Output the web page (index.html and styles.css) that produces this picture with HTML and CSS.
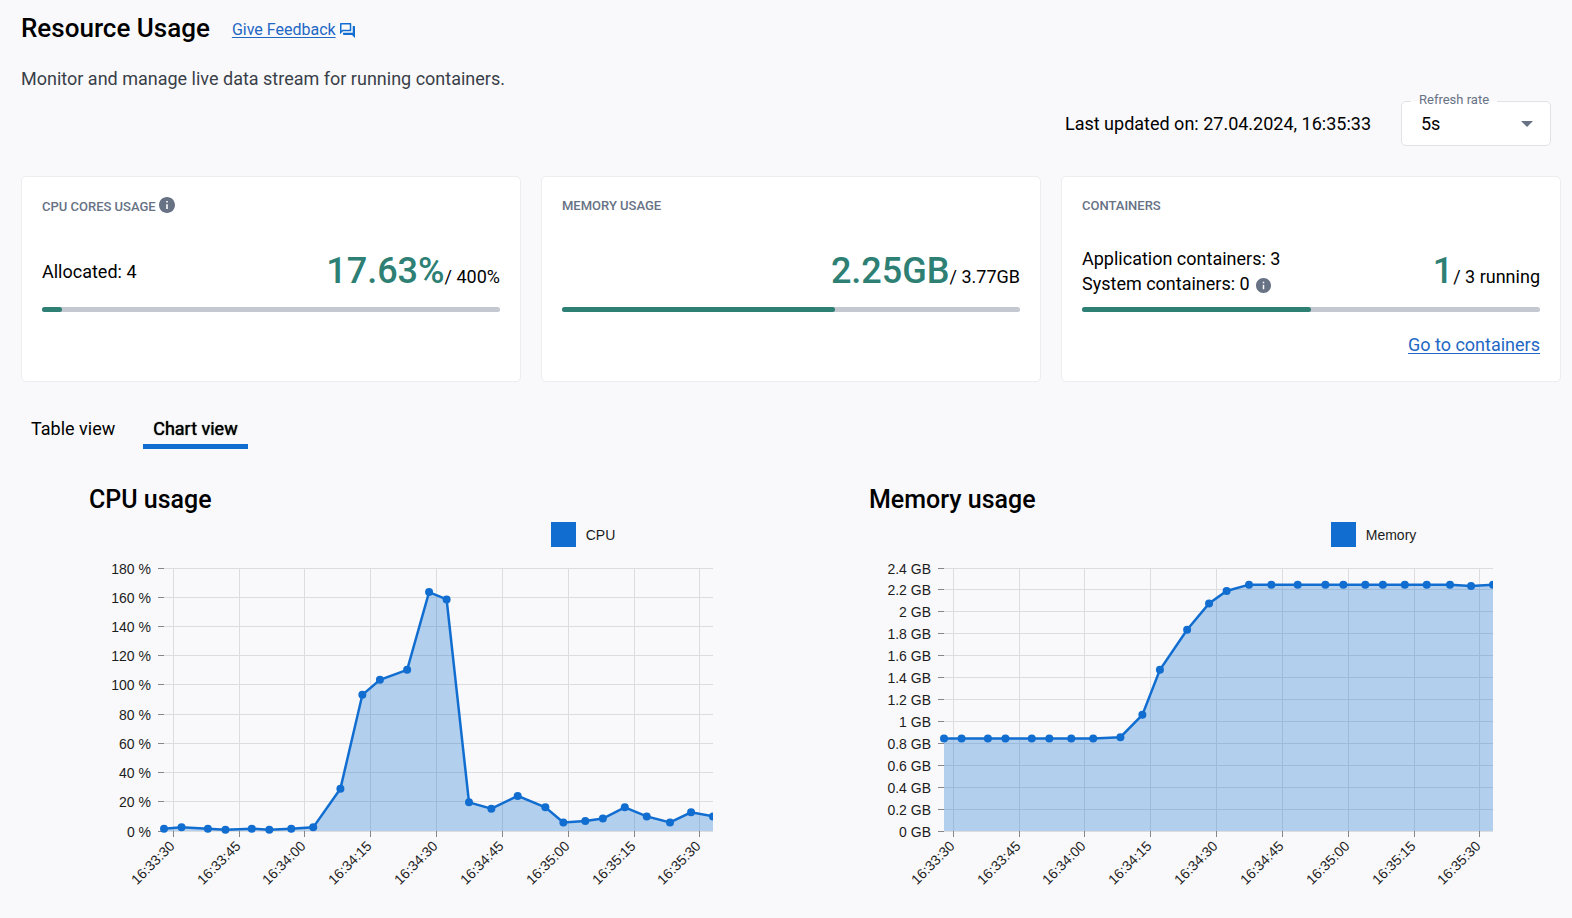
FILE: index.html
```html
<!DOCTYPE html>
<html lang="en">
<head>
  <meta charset="utf-8">
  <meta name="viewport" content="width=device-width, initial-scale=1">
  <title>Resource Usage</title>
  <link rel="stylesheet" href="styles.css">
</head>
<body>
  <svg class="sprite" aria-hidden="true">
    <symbol id="icon-info" viewBox="2 2 20 20">
      <path d="M12 2C6.48 2 2 6.48 2 12s4.48 10 10 10 10-4.48 10-10S17.52 2 12 2zm1 15h-2v-6h2v6zm0-8h-2V7h2v2z"/>
    </symbol>
  </svg>

  <main class="page">
    <header class="header">
      <div class="title-row">
        <h1 class="title">Resource Usage</h1>
        <a class="feedback" href="#feedback">
          <span class="feedback-text">Give Feedback</span>
          <svg class="feedback-icon" viewBox="2 2 20 20" aria-hidden="true">
            <path d="M15 4v7H5.17L4 12.17V4h11m1-2H3c-.55 0-1 .45-1 1v14l4-4h10c.55 0 1-.45 1-1V3c0-.55-.45-1-1-1zm5 4h-2v9H6v2c0 .55.45 1 1 1h11l4 4V7c0-.55-.45-1-1-1z"/>
          </svg>
        </a>
      </div>
      <p class="subtitle">Monitor and manage live data stream for running containers.</p>
    </header>

    <div class="toolbar">
      <span class="updated">Last updated on: 27.04.2024, 16:35:33</span>
      <div class="field">
        <label class="field-label" for="refresh">Refresh rate</label>
        <select class="select" id="refresh">
          <option>5s</option>
          <option>10s</option>
          <option>30s</option>
        </select>
        <svg class="select-arrow" viewBox="0 0 12 6" aria-hidden="true"><path d="M0 0h12L6 6z"/></svg>
      </div>
    </div>

    <section class="cards">
      <article class="card">
        <h2 class="card-title">CPU CORES USAGE <svg class="info" role="img" aria-label="Info"><use href="#icon-info"/></svg></h2>
        <div class="card-row">
          <div>Allocated: 4</div>
          <div class="stat"><strong class="stat-value">17.63%</strong>/ 400%</div>
        </div>
        <div class="bar"><div class="bar-fill" style="width: 4.4%"></div></div>
      </article>
      <article class="card">
        <h2 class="card-title">MEMORY USAGE</h2>
        <div class="card-row">
          <div></div>
          <div class="stat"><strong class="stat-value">2.25GB</strong>/ 3.77GB</div>
        </div>
        <div class="bar"><div class="bar-fill" style="width: 59.7%"></div></div>
      </article>
      <article class="card">
        <h2 class="card-title">CONTAINERS</h2>
        <div class="card-row">
          <div>
            <div>Application containers: 3</div>
            <div>System containers: 0 <svg class="info info-small" role="img" aria-label="Info"><use href="#icon-info"/></svg></div>
          </div>
          <div class="stat"><strong class="stat-value">1</strong>/ 3 running</div>
        </div>
        <div class="bar"><div class="bar-fill" style="width: 50%"></div></div>
        <a class="card-link" href="#containers">Go to containers</a>
      </article>
    </section>

    <nav class="tabs" role="tablist">
      <button class="tab" type="button" role="tab" aria-selected="false">Table view</button>
      <button class="tab tab-active" type="button" role="tab" aria-selected="true">Chart view</button>
    </nav>

    <section class="charts">
      <figure class="chart">
        <h2 class="chart-title">CPU usage</h2>
        <figcaption class="legend"><span class="swatch"></span>CPU</figcaption>
        <svg class="plot" id="cpu-plot" role="img" aria-label="CPU usage over time"></svg>
      </figure>
      <figure class="chart">
        <h2 class="chart-title">Memory usage</h2>
        <figcaption class="legend"><span class="swatch"></span>Memory</figcaption>
        <svg class="plot" id="memory-plot" role="img" aria-label="Memory usage over time"></svg>
      </figure>
    </section>
  </main>
  <script src="charts.js"></script>
</body>
</html>
```
FILE: styles.css
```css
* {
  box-sizing: border-box;
}

body {
  margin: 0;
  background: #f9f9fb;
  color: #000;
  font: 18px/25px Roboto, "Liberation Sans", sans-serif;
}

h1, h2, p, figure {
  margin: 0;
}

a {
  color: #2267c4;
  text-underline-offset: 2px;
}

.sprite {
  display: none;
}

.page {
  padding: 12px 1px 0 11px;
}

.header {
  padding: 0 10px;
}

.title-row {
  display: flex;
  align-items: center;
  gap: 22px;
}

.title {
  font-size: 26px;
  line-height: 32px;
  font-weight: 500;
}

.feedback {
  display: flex;
  align-items: center;
  gap: 4px;
  padding-top: 4px;
  font-size: 16px;
  line-height: 20px;
  text-decoration: none;
}

.feedback-text {
  text-decoration: underline;
}

.feedback-icon {
  width: 15px;
  height: 15px;
  fill: #116ed0;
}

.subtitle {
  padding-top: 22px;
  color: #393f49;
}

.toolbar {
  display: flex;
  justify-content: flex-end;
  align-items: center;
  gap: 30px;
  padding: 10px 20px 30px 10px;
}

.field {
  position: relative;
  width: 150px;
}

.field-label {
  position: absolute;
  top: -10px;
  left: 10px;
  padding: 0 8px;
  background: linear-gradient(#f9f9fb 10px, #fff 10px);
  color: #677285;
  font-size: 13px;
  line-height: 17px;
}

.select {
  display: block;
  width: 100%;
  height: 45px;
  padding: 0 19px;
  border: 1px solid #e1e2e6;
  border-radius: 5px;
  background: #fff;
  color: inherit;
  font: inherit;
  appearance: none;
}

.select-arrow {
  position: absolute;
  top: 20px;
  right: 18px;
  width: 12px;
  height: 6px;
  fill: #677285;
  pointer-events: none;
}

.cards {
  display: grid;
  grid-template-columns: repeat(3, 1fr);
  gap: 20px;
  padding: 0 10px;
}

.card {
  display: flex;
  flex-direction: column;
  min-height: 206px;
  padding: 20px;
  border: 1px solid #ededf0;
  border-radius: 5px;
  background: #fff;
}

.card-title {
  min-height: 20px;
  color: #677285;
  font-size: 13px;
  line-height: 17px;
  font-weight: 500;
}

.info {
  width: 16px;
  height: 16px;
  fill: #677285;
  vertical-align: -3px;
}

.card-title .info {
  vertical-align: -2px;
}

.info-small {
  width: 15px;
  height: 15px;
  margin-left: 2px;
}

.card-row {
  display: flex;
  justify-content: space-between;
  align-items: center;
  min-height: 50px;
  margin-top: 26px;
}

.stat {
  padding-top: 6px;
  line-height: 44px;
}

.stat-value {
  color: #2e7f74;
  font-size: 36px;
  font-weight: 500;
}

.bar {
  height: 5px;
  margin-top: 8px;
  border-radius: 3px;
  background: #c4c8d1;
}

.bar-fill {
  height: 100%;
  border-radius: 3px;
  background: #2e7f74;
}

.card-link {
  align-self: flex-end;
  margin-top: 20px;
}

.tabs {
  display: flex;
  gap: 18px;
  padding: 34px 10px 0;
}

.tab {
  padding: 0 10px 3px;
  border: 0;
  border-bottom: 5px solid transparent;
  background: none;
  color: inherit;
  font: inherit;
}

.tab-active {
  border-color: #116ed0;
  text-shadow: 0 0 1px #000;
}

.charts {
  display: grid;
  grid-template-columns: repeat(2, 1fr);
  padding-top: 35px;
}

.chart {
  width: 80%;
  margin: 0 auto;
}

.chart-title {
  font-size: 25px;
  line-height: 31px;
  font-weight: 500;
}

.legend {
  display: flex;
  align-items: center;
  gap: 10px;
  padding: 7px 0 0 74%;
  color: #1c1c1c;
  font: 14px/20px "Liberation Sans", Arial, sans-serif;
}

.swatch {
  width: 25px;
  height: 25px;
  background: #116ed0;
}

.plot {
  display: block;
  width: 100%;
  height: 350px;
}

.grid {
  stroke: #dddde0;
}

.tick {
  stroke: #86878a;
}

.axis-text {
  fill: #1c1c1c;
  font: 14px "Liberation Sans", Arial, sans-serif;
  text-anchor: end;
}

.area {
  fill: #116ed0;
  fill-opacity: 0.3;
}

.line {
  fill: none;
  stroke: #116ed0;
  stroke-width: 2.5;
}

.dot {
  fill: #116ed0;
}
```
FILE: charts.js
```js
const SVG_NS = "http://www.w3.org/2000/svg";

// Sample times, in seconds after the first sample.
const times = [
  0, 4, 10, 14, 20, 24, 29, 34, 40.2, 45.2, 49.2, 55.4, 60.4, 64.4, 69.5, 74.6,
  80.6, 86.9, 91, 96, 100, 105, 110, 115.3, 120.1, 125.1
];
const firstTick = 2.1;
const tickLabels = [
  "16:33:30", "16:33:45", "16:34:00", "16:34:15", "16:34:30",
  "16:34:45", "16:35:00", "16:35:15", "16:35:30"
];

const charts = [
  {
    id: "cpu-plot", left: 75, max: 180, step: 20, unit: "%",
    values: [
      1.6, 2.5, 1.6, 0.8, 1.6, 0.8, 1.6, 2.5, 29, 93.2, 103.5, 110.3, 163.5,
      158.5, 19.6, 15.3, 24, 16.2, 5.9, 6.9, 8.5, 16.2, 10, 5.9, 12.8, 10
    ]
  },
  {
    id: "memory-plot", left: 75, max: 2.4, step: 0.2, unit: "GB",
    values: [
      0.844, 0.844, 0.844, 0.844, 0.844, 0.844, 0.844, 0.844, 0.856, 1.06,
      1.471, 1.837, 2.077, 2.19, 2.248, 2.248, 2.248, 2.248, 2.248, 2.248,
      2.248, 2.248, 2.248, 2.248, 2.236, 2.248
    ]
  }
];

function add(parent, name, attrs, text) {
  const node = document.createElementNS(SVG_NS, name);
  for (const key in attrs) node.setAttribute(key, attrs[key]);
  if (text !== undefined) node.textContent = text;
  parent.appendChild(node);
}

function draw(chart) {
  const svg = document.getElementById(chart.id);
  svg.replaceChildren();
  const left = chart.left;
  const right = svg.clientWidth;
  const top = 21;
  const bottom = 284;
  const xAt = t => left + (right - left) * t / times[times.length - 1];
  const yAt = v => bottom - (bottom - top) * v / chart.max;
  const snap = n => Math.floor(n) + 0.5;

  const rows = Math.round(chart.max / chart.step);
  for (let i = 0; i <= rows; i++) {
    const value = Number((i * chart.step).toFixed(1));
    const y = snap(yAt(value));
    add(svg, "line", { class: "grid", x1: left, x2: right, y1: y, y2: y });
    add(svg, "line", { class: "tick", x1: left - 6, x2: left, y1: y, y2: y });
    add(svg, "text", { class: "axis-text", x: left - 13, y: y + 5 }, value + " " + chart.unit);
  }

  tickLabels.forEach((label, i) => {
    const x = snap(xAt(firstTick + i * 15));
    add(svg, "line", { class: "grid", x1: x, x2: x, y1: top, y2: bottom });
    add(svg, "line", { class: "tick", x1: x, x2: x, y1: bottom, y2: bottom + 6 });
    add(svg, "text", {
      class: "axis-text",
      transform: `translate(${x + 2} ${bottom + 16}) rotate(-45)`
    }, label);
  });

  const points = chart.values.map((v, i) => [xAt(times[i]), yAt(v)]);
  const path = points.map(p => p.join(" ")).join(" L");
  add(svg, "path", { class: "area", d: `M${left} ${bottom} L${path} L${right} ${bottom} Z` });
  add(svg, "path", { class: "line", d: `M${path}` });
  for (const [x, y] of points) {
    add(svg, "circle", { class: "dot", cx: x, cy: y, r: 4 });
  }
}

function drawAll() {
  charts.forEach(draw);
}

drawAll();
window.addEventListener("resize", drawAll);
```
